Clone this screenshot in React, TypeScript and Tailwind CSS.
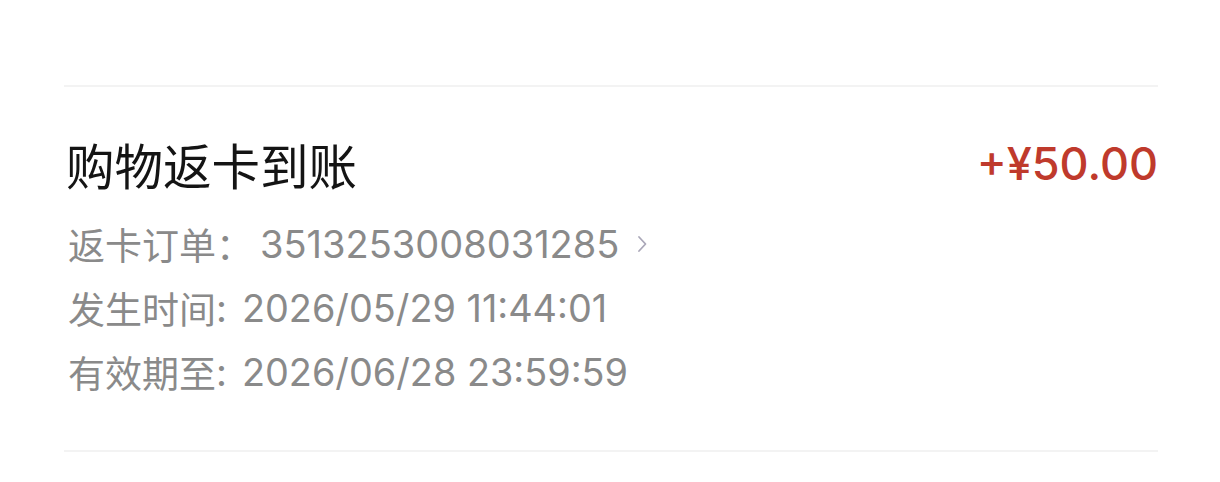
const cjk = { fontFamily: '"Noto Sans CJK SC", "Noto Sans", sans-serif' };
const num = { fontFamily: 'Inter, "Noto Sans CJK SC", sans-serif' };

export default function App() {
  return (
    <div className="w-[1220px] h-[482px] bg-white overflow-hidden" style={cjk}>
      <div className="ml-[64px] mr-[62px] pt-[85px]">
        <div className="h-[2px] bg-[#f3f3f3]" />
        <div className="mt-[49px] pl-[2px] flex items-center justify-between">
          <div className="text-[48.5px] leading-[56px] text-[#141414]">购物返卡到账</div>
          <div className="text-[45px] leading-[56px] font-medium text-[#bf3a2c]" style={num}>
            +¥50.00
          </div>
        </div>
        <div className="mt-[20px] pl-[4px] flex flex-col text-[37px] leading-[64px] text-[#8a8a8a]">
          <div className="flex items-center">
            <span>返卡订单：</span>
            <span className="ml-[7px] text-[38px]" style={num}>3513253008031285</span>
            <svg className="ml-[17px]" width="12" height="20" viewBox="0 0 12 20" fill="none">
              <path d="M3 3l6.5 7L3 17" stroke="#aaa7b8" strokeWidth="1.8" strokeLinecap="round" strokeLinejoin="round" />
            </svg>
          </div>
          <div className="flex items-center">
            <span>发生时间</span>
            <span className="text-[38px]" style={num}>:</span>
            <span className="ml-[15px] text-[37.8px]" style={num}>2026/05/29 11:44:01</span>
          </div>
          <div className="flex items-center">
            <span>有效期至</span>
            <span className="text-[38px]" style={num}>:</span>
            <span className="ml-[15px] text-[37.8px]" style={num}>2026/06/28 23:59:59</span>
          </div>
        </div>
        <div className="mt-[46px] h-[2px] bg-[#f3f3f3]" />
      </div>
    </div>
  );
}
